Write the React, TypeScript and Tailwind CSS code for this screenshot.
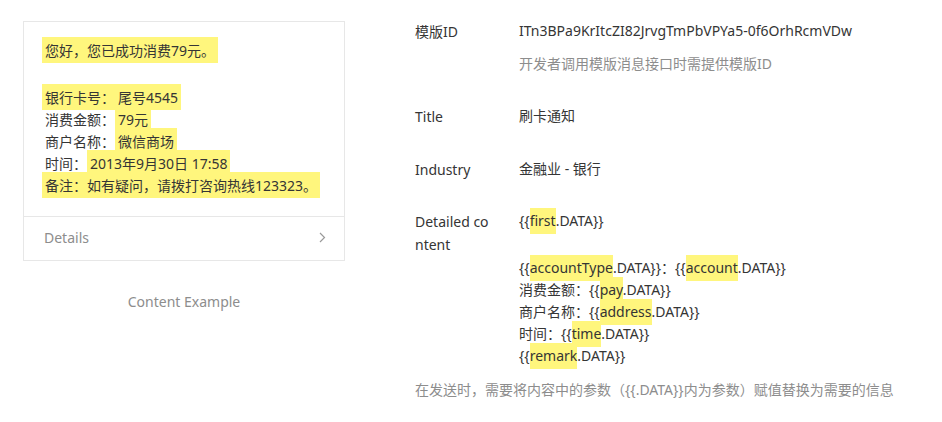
import React from "react"

const FONT = "font-['Segoe_UI','Noto_Sans','Noto_Sans_CJK_SC',sans-serif]"

function Hl({ children }: { children: React.ReactNode }) {
  return <span className="bg-[#fff67d] px-[3px] pt-[4px] pb-[3px]">{children}</span>
}

function Param({ name }: { name: string }) {
  return (
    <span>
      {"{{"}
      <span className="bg-[#fff67d] pt-[3px] pb-[4px]">{name}</span>
      .DATA{"}}"}
    </span>
  )
}

function PreviewCard() {
  return (
    <div className="w-[322px] flex flex-col items-center">
      <div className="w-full border border-[#e7e7e7] bg-white">
        <div className="px-[18px] pt-[18px] pb-[19px] text-[14px] leading-[22px] text-[#353535]">
          <div>
            <Hl>您好，您已成功消费79元。</Hl>
          </div>
          <div className="mt-[25px]">
            <Hl>银行卡号：</Hl>
            <span className="-ml-[3px]">
              <Hl>尾号4545</Hl>
            </span>
          </div>
          <div className="pl-[3px]">
            消费金额：<Hl>79元</Hl>
          </div>
          <div className="pl-[3px]">
            商户名称：<Hl>微信商场</Hl>
          </div>
          <div className="pl-[3px]">
            时间：<Hl>2013年9月30日 17:58 </Hl>
          </div>
          <div>
            <Hl>备注：如有疑问，请拨打咨询热线123323。</Hl>
          </div>
        </div>
        <div className="flex h-[44px] items-center justify-between border-t border-[#e7e7e7] pb-[2px] pl-[20px] pr-[18px] text-[14px] text-[#8d8d8d]">
          <span>Details</span>
          <svg width="7" height="11" viewBox="0 0 7 11" fill="none" aria-hidden>
            <path d="M1 1 L5.5 5.5 L1 10" stroke="#9a9a9a" strokeWidth="1.2" />
          </svg>
        </div>
      </div>
      <div className="mt-[30px] text-[14px] leading-[22px] text-[#8d8d8d]">Content Example</div>
    </div>
  )
}

function Row({ label, children, className = "" }: { label: string; children: React.ReactNode; className?: string }) {
  return (
    <div className={`flex ${className}`}>
      <div className="w-[80px] shrink-0 break-all text-[14px] leading-[23px] text-[#353535]">{label}</div>
      <div className="ml-[24px] flex-1 text-[14px] leading-[22px] text-[#353535]">{children}</div>
    </div>
  )
}

export default function App() {
  return (
    <div className={`${FONT} h-[422px] w-[942px] bg-white`}>
      <div className="flex pl-[23px] pt-[21px]">
        <PreviewCard />
        <div className="ml-[70px] -mt-[1px]">
          <Row label="模版ID">
            <div>ITn3BPa9KrItcZI82JrvgTmPbVPYa5-0f6OrhRcmVDw</div>
            <div className="mt-[11px] text-[#8d8d8d]">开发者调用模版消息接口时需提供模版ID</div>
          </Row>
          <Row label="Title" className="mt-[30px]">
            刷卡通知
          </Row>
          <Row label="Industry" className="mt-[30px]">
            金融业 - 银行
          </Row>
          <Row label="Detailed content" className="mt-[29px]">
            <div>
              <Param name="first" />
            </div>
            <div className="mt-[25px]">
              <Param name="accountType" />：<Param name="account" />
            </div>
            <div>
              消费金额：<Param name="pay" />
            </div>
            <div>
              商户名称：<Param name="address" />
            </div>
            <div>
              时间：<Param name="time" />
            </div>
            <div>
              <Param name="remark" />
            </div>
          </Row>
          <div className="mt-[12px] text-[14px] leading-[22px] text-[#8d8d8d]">
            在发送时，需要将内容中的参数（{"{{.DATA}}"}内为参数）赋值替换为需要的信息
          </div>
        </div>
      </div>
    </div>
  )
}
